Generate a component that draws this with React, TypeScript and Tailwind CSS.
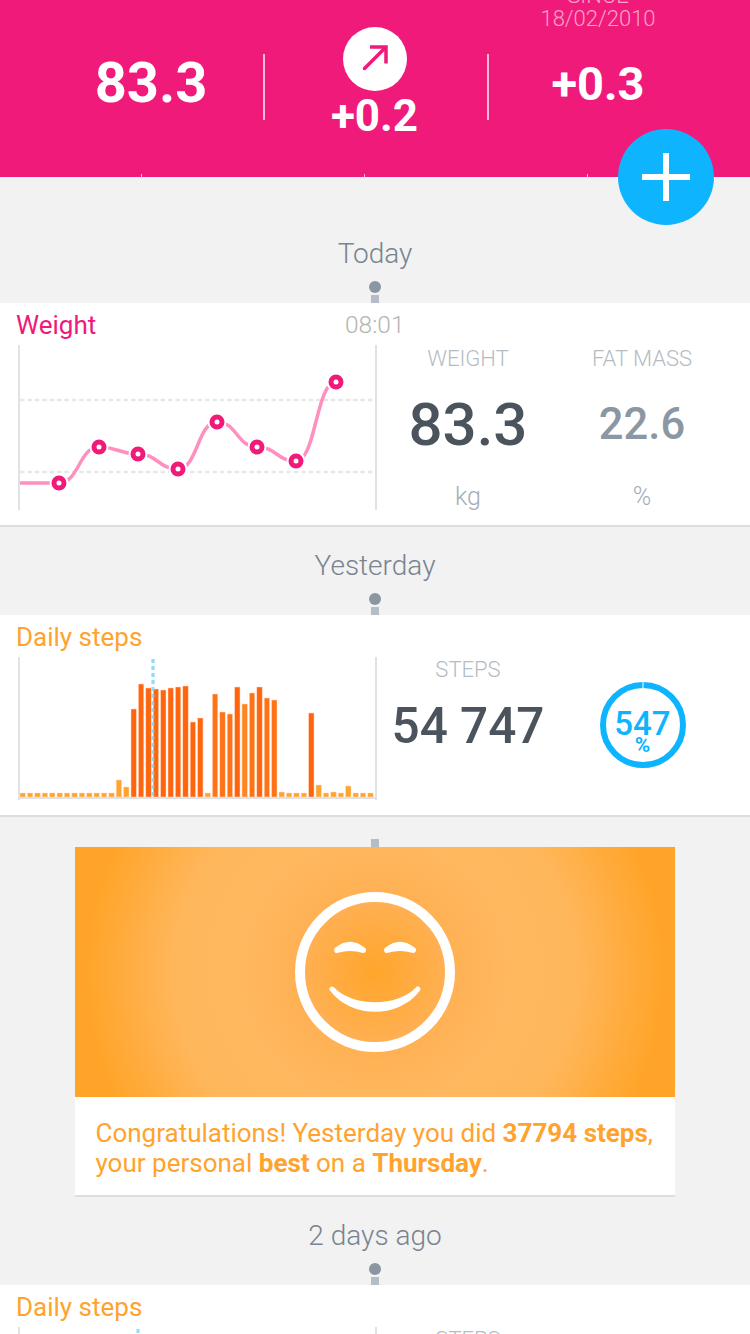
const PINK = "#f01a7a";

const weightPoints: [number, number][] = [
  [2, 138],
  [41, 138],
  [81, 102],
  [120, 109],
  [160, 124],
  [199, 77],
  [239, 102],
  [278, 116],
  [318, 37],
];

// height of each bar above the chart's base line
const stepBars = [
  4, 4, 4, 4, 4, 4, 4, 4, 4, 4, 4, 4, 4, 17, 10, 88, 113, 109, 108, 107, 109, 110, 111, 75, 79, 4,
  103, 85, 83, 110, 93, 104, 110, 99, 97, 5, 4, 4, 4, 84, 12, 4, 5, 4, 11, 4, 4, 4,
];
const midBars = [26, 27, 28, 31, 33, 34];

function linePath(points: [number, number][]) {
  return points
    .map(([x, y], i) => {
      if (i === 0) return `M${x} ${y}`;
      const [px, py] = points[i - 1];
      const mid = (px + x) / 2;
      return `C${mid} ${py} ${mid} ${y} ${x} ${y}`;
    })
    .join(" ");
}

function DayHeader({ label, extraTop = false }: { label: string; extraTop?: boolean }) {
  return (
    <div className={`flex flex-col items-center ${extraTop ? "pt-[38px]" : ""}`}>
      <div className="flex h-[76px] items-center pt-[2px] text-[28px] font-light leading-none text-[#78848f]">
        {label}
      </div>
      <div className="-mt-[10px] h-3 w-3 rounded-full bg-[#8a97a3]" />
      <div className="mt-[2px] h-2 w-2 bg-[#b4bcc6]" />
    </div>
  );
}

function WeightChart() {
  return (
    <svg width="360" height="165" viewBox="0 0 360 165" className="shrink-0">
      <line x1="1" y1="0" x2="1" y2="165" stroke="#dfe3e8" strokeWidth="2" />
      <line x1="358" y1="0" x2="358" y2="165" stroke="#dfe3e8" strokeWidth="2" />
      <line x1="2" y1="55" x2="357" y2="55" stroke="#e3e8e8" strokeWidth="2.5" strokeDasharray="4.5 2.9" />
      <line x1="2" y1="127" x2="357" y2="127" stroke="#e3e8e8" strokeWidth="2.5" strokeDasharray="4.5 2.9" />
      <path d={linePath(weightPoints)} fill="none" stroke="#ff8fbe" strokeWidth="3.5" />
      {weightPoints.slice(1).map(([x, y]) => (
        <g key={x}>
          <circle cx={x} cy={y} r="9.5" fill="#fff" />
          <circle cx={x} cy={y} r="7.5" fill={PINK} />
          <circle cx={x} cy={y} r="2.5" fill="#fff" />
        </g>
      ))}
    </svg>
  );
}

function barColor(i: number, height: number) {
  if (height < 20) return "#ffa52e";
  if (i === 30) return "#ff8520";
  if (midBars.includes(i)) return "#ff7316";
  return "#ff640f";
}

function StepsChart({ bars, marker }: { bars: number[]; marker: number }) {
  return (
    <svg width="360" height="143" viewBox="0 0 360 143" className="shrink-0">
      <line x1="1" y1="0" x2="1" y2="143" stroke="#dfe3e8" strokeWidth="2" />
      <line x1="358" y1="0" x2="358" y2="143" stroke="#dfe3e8" strokeWidth="2" />
      <line x1="0" y1="141" x2="359" y2="141" stroke="#dfe3e8" strokeWidth="2" />
      <line x1={marker} y1="2" x2={marker} y2="140" stroke="#8fdcff" strokeWidth="3" strokeDasharray="4 3" />
      {bars.map((height, i) => {
        const x = 2 + i * 7.4;
        return (
          <rect
            key={x}
            x={x}
            y={140 - height}
            width="5.4"
            height={height}
            fill={barColor(i, height)}
            stroke="#ffd9c2"
            strokeWidth="0.5"
          />
        );
      })}
      {bars.length > 0 && (
        <line x1={marker} y1="2" x2={marker} y2="140" stroke="#8fdcff" strokeWidth="3" strokeDasharray="4 3" opacity="0.45" />
      )}
    </svg>
  );
}

function StatColumn({
  label,
  value,
  unit,
  big,
}: {
  label: string;
  value: string;
  unit: string;
  big?: boolean;
}) {
  return (
    <div className="flex flex-col items-center">
      <div className="flex h-[26px] items-center pt-[2px] text-[22px] font-light leading-none text-[#b4bcc4]">{label}</div>
      <div
        className={`flex h-[106px] items-center pt-[2px] font-medium leading-none ${
          big ? "text-[60px] text-[#4b545c]" : "text-[43.5px] text-[#8b97a3]"
        }`}
      >
        {value}
      </div>
      <div className="flex h-[38px] items-center text-[25px] font-light leading-none text-[#a4adb5]">{unit}</div>
    </div>
  );
}

function Ring() {
  return (
    <div className="relative ml-[1px] flex h-[86px] w-[86px] flex-col items-center justify-center pt-[14px] text-[#0fb4ff]">
      <svg width="86" height="86" viewBox="0 0 86 86" className="absolute inset-0">
        <circle cx="43" cy="43" r="40" fill="none" stroke="#0fb4ff" strokeWidth="6" />
        <line x1="43" y1="0" x2="43" y2="6" stroke="#bde9ff" strokeWidth="1.5" />
      </svg>
      <span className="text-[33px] font-medium leading-[28px]">547</span>
      <span className="-mt-[2px] text-[21px] font-bold leading-[18px]">%</span>
    </div>
  );
}

function StepsCard({ bars, marker }: { bars: number[]; marker: number }) {
  return (
    <div className="h-[202px] overflow-hidden border-b-2 border-[#dddddd] bg-white">
      <div className="flex h-[42px] items-center pl-[16px] pt-[2px] text-[26px] leading-none text-[#ffa32e]">Daily steps</div>
      <div className="flex pl-[18px]">
        <StepsChart bars={bars} marker={marker} />
        <div className="grid grid-cols-[180px_168px]">
          <div className="flex flex-col items-center">
            <div className="flex h-6 items-center pt-[2px] text-[22px] font-light leading-none text-[#b4bcc4]">STEPS</div>
            <div className="flex h-[90px] items-center pt-[2px] text-[49.5px] font-medium leading-none text-[#4b545c]">54 747</div>
          </div>
          <div className="flex justify-center pt-[25px]">
            <Ring />
          </div>
        </div>
      </div>
    </div>
  );
}

export default function App() {
  return (
    <div className="relative h-[1334px] w-[750px] overflow-hidden bg-[#f2f2f2] font-['Roboto',sans-serif]">
      <header className="flex h-[177px] flex-col overflow-hidden bg-[#f01a7a] text-white">
        <div className="flex flex-1 pl-[39px]">
          <div className="flex w-[224px] flex-col items-center pt-[55px]">
            <span className="text-[56px] font-bold leading-[56px]">83.3</span>
          </div>
          <div className="mt-[54px] h-[66px] w-[2px] bg-white/70" />
          <div className="flex w-[222px] flex-col items-center pr-[3px] pt-[27px]">
            <div className="flex h-16 w-16 items-center justify-center rounded-full bg-white">
              <svg width="64" height="64" viewBox="0 0 64 64" fill="none" stroke={PINK} strokeWidth="3.5">
                <path d="M21.5 41.5 42 21" strokeLinecap="round" />
                <path d="M27 20H43V36.5" />
              </svg>
            </div>
            <span className="text-[44px] font-bold leading-[50px]">+0.2</span>
          </div>
          <div className="mt-[54px] h-[66px] w-[2px] bg-white/70" />
          <div className="-mt-[16px] flex w-[218px] flex-col items-center">
            <span className="text-[22px] font-light leading-[24px] text-white/60">SINCE</span>
            <span className="-mt-[1px] text-[22px] font-light leading-[24px] text-white/60">18/02/2010</span>
            <span className="mt-[28px] text-[47px] font-bold leading-[50px]">+0.3</span>
          </div>
        </div>
        <div className="flex h-[3px] gap-[222px] pl-[141px]">
          <div className="w-px bg-white/70" />
          <div className="w-px bg-white/70" />
          <div className="w-px bg-white/70" />
        </div>
      </header>

      <button className="absolute left-[618px] top-[129px] flex h-24 w-24 items-center justify-center rounded-full bg-[#0fb4ff]">
        <svg width="48" height="48" viewBox="0 0 48 48" fill="#fff">
          <rect x="21" y="0" width="6" height="48" />
          <rect x="0" y="21" width="48" height="6" />
        </svg>
      </button>

      <DayHeader label="Today" extraTop />
      <div className="h-[224px] overflow-hidden border-b-2 border-[#dddddd] bg-white">
        <div className="relative flex h-[42px] items-center pl-[16px] pt-[2px] text-[26px] leading-none text-[#ed1a7b]">
          Weight
          <span className="absolute left-[345px] text-[24.5px] font-light text-[#b5b5b0]">08:01</span>
        </div>
        <div className="flex pl-[18px]">
          <WeightChart />
          <div className="grid grid-cols-[180px_168px]">
            <StatColumn label="WEIGHT" value="83.3" unit="kg" big />
            <StatColumn label="FAT MASS" value="22.6" unit="%" />
          </div>
        </div>
      </div>

      <DayHeader label="Yesterday" />
      <StepsCard bars={stepBars} marker={135} />

      <div className="flex h-[30px] justify-center pt-[22px]">
        <div className="h-2 w-2 bg-[#b4bcc6]" />
      </div>
      <div className="mx-[75px] border-b-2 border-[#dddddd] bg-white">
        <div className="flex h-[250px] items-center justify-center bg-[radial-gradient(circle_at_center,#ffa52b_0px,#ffb052_70px,#ffb85f_135px,#ffb75c_200px,#ffa428_290px)]">
          <svg width="160" height="160" viewBox="0 0 160 160" fill="none" stroke="#fff">
            <circle cx="80" cy="80" r="75" strokeWidth="10" />
            <g fill="#fff" strokeLinecap="round" strokeLinejoin="round">
              <path d="M42 58Q55 47.5 68 58Q55 54 42 58Z" strokeWidth="6" />
              <path d="M92 58Q105 47.5 118 58Q105 54 92 58Z" strokeWidth="6" />
              <path d="M37 97C57 118 103 118 123 97C103 124 57 124 37 97Z" strokeWidth="5" />
            </g>
          </svg>
        </div>
        <p className="h-[98px] px-[20.5px] pt-[21px] text-[26px] leading-[30px] text-[#ffa32e]">
          Congratulations! Yesterday you did <b className="font-bold">37794 steps</b>, your personal{" "}
          <b className="font-bold">best</b> on a <b className="font-bold">Thursday</b>.
        </p>
      </div>

      <DayHeader label="2 days ago" />
      <StepsCard bars={[]} marker={120} />
    </div>
  );
}
